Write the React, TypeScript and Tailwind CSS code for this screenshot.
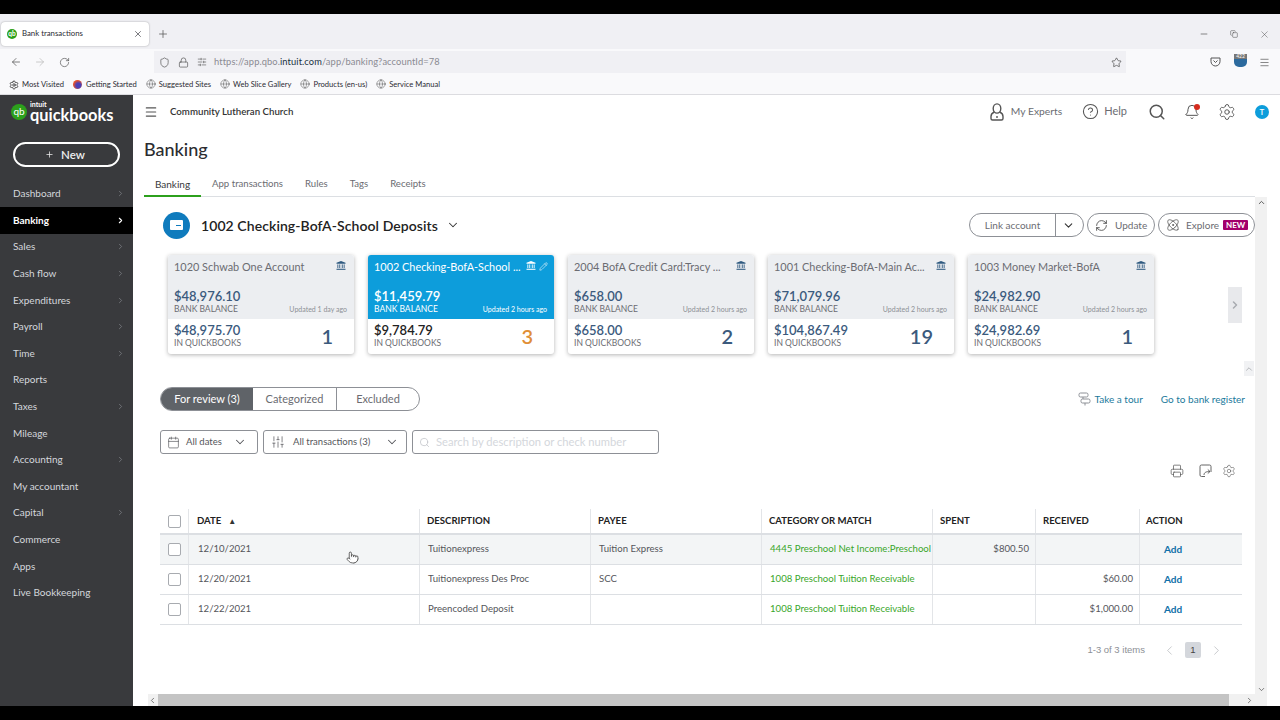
import {
  ArrowLeft, ArrowRight, RotateCw, Shield, Lock, Star, Globe, Settings, Minus, X, Plus, Menu,
  Search, Bell, ChevronRight, ChevronLeft, ChevronDown, ChevronUp, Pencil, RefreshCw, Atom, Calendar,
  SlidersVertical, Printer, Pointer, CircleHelp, Copy,
} from 'lucide-react'

const NAV = [
  { name: 'Dashboard', arrow: true },
  { name: 'Banking', arrow: true, active: true },
  { name: 'Sales', arrow: true },
  { name: 'Cash flow', arrow: true },
  { name: 'Expenditures', arrow: true },
  { name: 'Payroll', arrow: true },
  { name: 'Time', arrow: true },
  { name: 'Reports' },
  { name: 'Taxes', arrow: true },
  { name: 'Mileage' },
  { name: 'Accounting', arrow: true },
  { name: 'My accountant' },
  { name: 'Capital', arrow: true },
  { name: 'Commerce' },
  { name: 'Apps' },
  { name: 'Live Bookkeeping' },
]

const CARDS = [
  { name: '1020 Schwab One Account', bank: '$48,976.10', updated: 'Updated 1 day ago', qb: '$48,975.70', count: '1' },
  { name: '1002 Checking-BofA-School ...', bank: '$11,459.79', updated: 'Updated 2 hours ago', qb: '$9,784.79', count: '3', active: true },
  { name: '2004 BofA Credit Card:Tracy ...', bank: '$658.00', updated: 'Updated 2 hours ago', qb: '$658.00', count: '2' },
  { name: '1001 Checking-BofA-Main Ac...', bank: '$71,079.96', updated: 'Updated 2 hours ago', qb: '$104,867.49', count: '19' },
  { name: '1003 Money Market-BofA', bank: '$24,982.90', updated: 'Updated 2 hours ago', qb: '$24,982.69', count: '1' },
]

const ROWS = [
  { date: '12/10/2021', desc: 'Tuitionexpress', payee: 'Tuition Express', cat: '4445 Preschool Net Income:Preschool', spent: '$800.50', received: '', hover: true },
  { date: '12/20/2021', desc: 'Tuitionexpress Des Proc', payee: 'SCC', cat: '1008 Preschool Tuition Receivable', spent: '', received: '$60.00' },
  { date: '12/22/2021', desc: 'Preencoded Deposit', payee: '', cat: '1008 Preschool Tuition Receivable', spent: '', received: '$1,000.00' },
]

const BOOKMARKS = ['Suggested Sites', 'Web Slice Gallery', 'Products (en-us)', 'Service Manual']

const COLS = 'grid grid-cols-[29px_231px_171px_171px_171px_103px_104px_103px]'

function BankIcon({ className }: { className?: string }) {
  return (
    <svg width="10" height="9" viewBox="0 0 11 10" fill="currentColor" className={className}>
      <path d="M5.5 0 L10.5 2 V3 H0.5 V2 Z" />
      <rect x="1.5" y="3.8" width="1" height="4" />
      <rect x="3.6" y="3.8" width="1" height="4" />
      <rect x="6.4" y="3.8" width="1" height="4" />
      <rect x="8.5" y="3.8" width="1" height="4" />
      <rect x="0.5" y="8.6" width="10" height="1.2" />
    </svg>
  )
}

function BrowserChrome() {
  return (
    <div className="font-['Lato',sans-serif] text-[#2b2b33]">
      <div className="h-[35px] bg-[#f0f0f4] flex items-center pl-[1px] pt-[5px]">
        <div className="w-[148px] h-[24px] bg-white rounded-[4px] shadow-[0_0_2px_rgba(0,0,0,0.35)] flex items-center pl-[6px] pr-[6px] mb-[1px]">
          <div className="w-[10px] h-[10px] rounded-full bg-[#2ca01c] text-white text-[6.5px] font-bold leading-[10px] text-center">qb</div>
          <span className="ml-[5px] text-[7.8px] flex-1">Bank transactions</span>
          <X size={10} strokeWidth={1.5} />
        </div>
        <Plus size={12} strokeWidth={1.5} className="ml-[8px] text-[#555]" />
        <div className="ml-auto flex items-center text-[#444]">
          <Minus size={10} strokeWidth={1.5} className="mr-[21px]" />
          <Copy size={8} strokeWidth={1.5} className="mr-[21px]" />
          <X size={11} strokeWidth={1} className="mr-[10px]" />
        </div>
      </div>
      <div className="h-[26px] bg-[#f9f9fb] flex items-center">
        <ArrowLeft size={12} strokeWidth={1.5} className="ml-[10px] text-[#555]" />
        <ArrowRight size={12} strokeWidth={1.5} className="ml-[12px] text-[#bbb]" />
        <RotateCw size={11} strokeWidth={1.5} className="ml-[13px] text-[#555]" />
        <div className="ml-[84px] w-[972px] h-[22px] bg-[#f0f0f4] flex items-center pl-[5px] pr-[4px]">
          <Shield size={11} strokeWidth={1.5} className="text-[#555]" />
          <Lock size={11} strokeWidth={1.5} className="ml-[8px] text-[#555]" />
          <SlidersVertical size={10} strokeWidth={1.5} className="ml-[8px] rotate-90 text-[#555]" />
          <span className="ml-[7px] text-[9.3px] text-[#8a8a92] tracking-[0.1px]">
            https://app.qbo.<span className="text-[#20303f]">intuit.com</span>/app/banking?accountId=78
          </span>
          <Star size={11} strokeWidth={1.5} className="ml-auto text-[#444]" />
        </div>
        {/* pocket */}
        <svg width="11" height="10" viewBox="0 0 11 10" fill="none" stroke="#555" strokeWidth="1" className="ml-[84px]">
          <path d="M1 1 H10 V4.5 A4.5 4.5 0 0 1 1 4.5 Z" />
          <path d="M3.5 3.5 L5.5 5.5 L7.5 3.5" />
        </svg>
        <div className="ml-[13px] w-[13px] h-[13px] bg-[#2c6a9e] rounded-b-[5px] relative mb-[3px]">
          <span className="absolute top-0 left-0 w-[13px] h-[5px] bg-[#777] text-white text-[5px] leading-[5px] text-center">422</span>
        </div>
        <Menu size={11} strokeWidth={1.5} className="ml-[12px] text-[#555]" />
      </div>
      <div className="h-[20px] bg-[#f9f9fb] flex items-center text-[7.6px] border-b border-[#dcdce0] pl-[9px]">
        <Settings size={10} strokeWidth={2} className="text-[#333]" />
        <span className="ml-[3px]">Most Visited</span>
        <span className="ml-[9px] w-[9px] h-[9px] rounded-full bg-[radial-gradient(circle_at_60%_60%,#4a3fb5_30%,#e8502a_65%)]" />
        <span className="ml-[4px]">Getting Started</span>
        {BOOKMARKS.map(b => (
          <span key={b} className="flex items-center ml-[9px]">
            <Globe size={10} strokeWidth={1} className="text-[#333]" />
            <span className="ml-[3px]">{b}</span>
          </span>
        ))}
      </div>
    </div>
  )
}

function Sidebar() {
  return (
    <div className="w-[133px] shrink-0 bg-[#393a3d] text-white flex flex-col">
      <div className="h-[36px] flex items-center pl-[11px]">
        <div className="w-[16px] h-[16px] rounded-full bg-[#2ca01c] text-white text-[10px] leading-[15px] text-center mb-[2px]">qb</div>
        <div className="ml-[3px] mb-[4px] flex flex-col">
          <span className="text-[7px] leading-[7px] font-bold">intuit</span>
          <span className="text-[16.4px] leading-[13px] font-bold">quickbooks</span>
        </div>
      </div>
      <div className="mt-[11px] mx-[13px] h-[25px] rounded-full border-2 border-white flex items-center justify-center text-[11.5px] font-semibold text-[#eee] pr-[3px]">
        <Plus size={9} strokeWidth={2} className="mr-[7px]" />New
      </div>
      <div className="mt-[13.5px]">
        {NAV.map(n => (
          <div key={n.name} className={`h-[26.6px] flex items-center pl-[13px] pr-[8px] text-[10px] ${n.active ? 'bg-black text-white font-bold' : 'text-[#d4d7dc]'}`}>
            <span className="flex-1">{n.name}</span>
            {n.arrow && <ChevronRight size={9} strokeWidth={n.active ? 3 : 2} className={n.active ? 'text-white' : 'text-[#7d8086]'} />}
          </div>
        ))}
      </div>
    </div>
  )
}

function AccountCard({ card }: { card: typeof CARDS[number] }) {
  const a = card.active
  return (
    <div className="w-[186px] h-[99px] rounded-[3px] overflow-hidden shadow-[0_1px_4px_rgba(0,0,0,0.3)] shrink-0 bg-white">
      <div className={`h-[64px] px-[6px] relative ${a ? 'bg-[#0d9ddb] text-white' : 'bg-[#eceef1] text-[#6b6c72]'}`}>
        <div className="pt-[5px] text-[10.9px] leading-[14px] whitespace-nowrap">{card.name}</div>
        <BankIcon className={`absolute top-[6px] ${a ? 'right-[18px]' : 'right-[8px] text-[#2f5a80]'}`} />
        {a && <Pencil size={9} strokeWidth={1.5} className="absolute top-[7px] right-[6px]" />}
        <div className={`mt-[15px] text-[13px] leading-[15px] font-semibold ${a ? 'text-white' : 'text-[#3b5a7d]'}`}>{card.bank}</div>
        <div className="flex justify-between items-baseline">
          <span className="text-[8.5px] leading-[11px]">BANK BALANCE</span>
          <span className={`text-[7px] pr-[1px] ${a ? 'text-white' : 'text-[#8d9096]'}`}>{card.updated}</span>
        </div>
      </div>
      <div className="h-[35px] px-[6px] flex items-center">
        <div className="flex-1 pb-[2px]">
          <div className={`text-[13px] leading-[15px] font-semibold ${a ? 'text-[#222]' : 'text-[#3b5a7d]'}`}>{card.qb}</div>
          <div className="text-[8.5px] leading-[10px] text-[#6b6c72]">IN QUICKBOOKS</div>
        </div>
        <div className={`mr-[15px] pb-[2px] text-right text-[20px] font-semibold ${a ? 'text-[#e08e36]' : 'text-[#3b5a7d]'}`}>{card.count}</div>
      </div>
    </div>
  )
}

function Checkbox() {
  return <div className="w-[13px] h-[13px] border border-[#a8abb0] rounded-[2px] bg-white" />
}

function TransactionsTable() {
  return (
    <div className="w-[1082px] text-[9.6px]">
      <div className={`${COLS} h-[26px] border-b-2 border-[#dcdfe3] font-bold text-[#222] items-stretch`}>
        <div className="flex items-center justify-center border-r border-[#e3e5e8]"><Checkbox /></div>
        <div className="flex items-center pl-[8px] border-r border-[#e3e5e8]">
          DATE<span className="ml-[7px] text-[8px] text-[#333]">▲</span>
        </div>
        <div className="flex items-center pl-[7px] border-r border-[#e3e5e8]">DESCRIPTION</div>
        <div className="flex items-center pl-[7px] border-r border-[#e3e5e8]">PAYEE</div>
        <div className="flex items-center pl-[7px] border-r border-[#e3e5e8]">CATEGORY OR MATCH</div>
        <div className="flex items-center pl-[7px] border-r border-[#e3e5e8]">SPENT</div>
        <div className="flex items-center pl-[7px] border-r border-[#e3e5e8]">RECEIVED</div>
        <div className="flex items-center pl-[6px]">ACTION</div>
      </div>
      {ROWS.map(r => (
        <div key={r.date} className={`${COLS} h-[30px] border-b border-[#dcdfe3] text-[#55565b] ${r.hover ? 'bg-[#f3f5f6]' : 'bg-white'}`}>
          <div className="flex items-center justify-center border-r border-[#e3e5e8]"><Checkbox /></div>
          <div className="flex items-center pl-[9px] border-r border-[#e3e5e8]">{r.date}</div>
          <div className="flex items-center pl-[8px] border-r border-[#e3e5e8]">{r.desc}</div>
          <div className="flex items-center pl-[8px] border-r border-[#e3e5e8]">{r.payee}</div>
          <div className="flex items-center pl-[8px] border-r border-[#e3e5e8] text-[#3aa62a] whitespace-nowrap overflow-hidden">{r.cat}</div>
          <div className="flex items-center justify-end pr-[6px] border-r border-[#e3e5e8]">{r.spent}</div>
          <div className="flex items-center justify-end pr-[6px] border-r border-[#e3e5e8]">{r.received}</div>
          <div className="flex items-center pl-[24px] pb-[1px] font-bold text-[#0f6fa8] text-[10px]">Add</div>
        </div>
      ))}
    </div>
  )
}

export default function App() {
  return (
    <div className="h-[720px] w-[1280px] bg-black flex flex-col overflow-hidden relative font-['Lato',sans-serif]">
      <div className="h-[14px] shrink-0" />
      <BrowserChrome />
      <div className="h-[611px] flex bg-white">
        <Sidebar />
        <div className="w-[1147px] flex flex-col text-[#393a3d]">
          {/* barra superior */}
          <div className="h-[33px] shrink-0 flex items-center pl-[11px] pr-[11px]">
            <Menu size={14} strokeWidth={2} className="text-[#555]" />
            <span className="ml-[12px] text-[9.7px] font-semibold text-[#333]">Community Lutheran Church</span>
            <div className="ml-auto flex items-center text-[#6b6c72]">
              <svg width="14" height="18" viewBox="0 0 14 18" fill="none" stroke="#555" strokeWidth="1.4">
                <ellipse cx="7" cy="5.5" rx="3.8" ry="4.6" />
                <path d="M4.4 9 C2 10 1 11.5 1 13.5 V15.5 A1.5 1.5 0 0 0 2.5 17 H11.5 A1.5 1.5 0 0 0 13 15.5 V13.5 C13 11.5 12 10 9.6 9" />
                <path d="M7 13 V15" />
              </svg>
              <span className="ml-[7px] text-[10.3px]">My Experts</span>
              <CircleHelp size={17} strokeWidth={1.5} className="ml-[20px] text-[#555]" />
              <span className="ml-[5px] text-[11px]">Help</span>
              <Search size={18} strokeWidth={2} className="ml-[21px] text-[#555]" />
              <span className="ml-[18px] relative">
                <Bell size={16} strokeWidth={1.5} className="text-[#555]" />
                <span className="absolute top-0 right-0 w-[6px] h-[6px] rounded-full bg-[#d52b1e]" />
              </span>
              <Settings size={18} strokeWidth={1.25} className="ml-[18px] text-[#555]" />
              <span className="ml-[19px] w-[14px] h-[14px] rounded-full bg-[#0d9ddb] text-white text-[8px] font-semibold leading-[14px] text-center">T</span>
            </div>
          </div>

          <h1 className="h-[42px] shrink-0 pl-[11px] text-[18px] leading-[42px] font-medium text-[#2b2c30]">Banking</h1>

          <div className="flex-1 flex min-h-0">
            <div className="w-[1122px] shrink-0 flex flex-col">
              <div className="flex-1 min-h-0">
                {/* abas */}
                <div className="ml-[11px] h-[27px] flex border-b border-[#dcdfe3] text-[9.6px] text-[#6b6c72] items-stretch">
                  <div className="w-[57px] flex items-center justify-center pt-[3px] text-[#393a3d] text-[10px] border-b-2 border-[#2ca01c] -mb-[1px]">Banking</div>
                  <div className="ml-[11px] pt-[3px] flex items-center">App transactions</div>
                  <div className="ml-[22px] pt-[3px] flex items-center">Rules</div>
                  <div className="ml-[22px] pt-[3px] flex items-center">Tags</div>
                  <div className="ml-[22px] pt-[3px] flex items-center">Receipts</div>
                </div>

                {/* conta selecionada */}
                <div className="h-[56px] flex items-center pl-[30px]">
                  <div className="w-[27px] h-[27px] rounded-full bg-[#0f7bbd] flex items-center justify-center">
                    <div className="w-[13px] h-[10px] bg-white rounded-[1px] relative">
                      <span className="absolute left-[6px] top-[5px] w-[5px] h-[1px] bg-[#0f7bbd]" />
                    </div>
                  </div>
                  <span className="ml-[11px] text-[14px] font-semibold text-[#222] tracking-[0.08px]">1002 Checking-BofA-School Deposits</span>
                  <ChevronDown size={14} strokeWidth={1.75} className="ml-[8px] text-[#333]" />
                  <div className="ml-auto flex items-center text-[10px] text-[#6b6c72]">
                    <div className="w-[115px] h-[24px] border border-[#8d9096] rounded-full flex items-center">
                      <span className="w-[86px] text-center border-r border-[#8d9096] h-full leading-[22px]">Link account</span>
                      <ChevronDown size={13} strokeWidth={2} className="ml-[6px] text-[#333]" />
                    </div>
                    <div className="ml-[3px] w-[68px] h-[24px] border border-[#8d9096] rounded-full flex items-center pl-[7px]">
                      <RefreshCw size={13} strokeWidth={1.5} className="text-[#444]" />
                      <span className="ml-[7px]">Update</span>
                    </div>
                    <div className="ml-[3px] w-[97px] h-[24px] border border-[#8d9096] rounded-full flex items-center pl-[7px]">
                      <Atom size={14} strokeWidth={1.25} className="text-[#444]" />
                      <span className="ml-[6px]">Explore</span>
                      <span className="ml-[4px] px-[3px] bg-[#a3006b] text-white text-[8px] font-bold leading-[10px] rounded-[1px]">NEW</span>
                    </div>
                  </div>
                </div>

                {/* cards */}
                <div className="mt-[2px] pl-[35px] flex gap-[14px] relative">
                  {CARDS.map(c => <AccountCard key={c.name} card={c} />)}
                  <div className="absolute left-[1095px] top-[32px] w-[14px] h-[36px] bg-[#e8e9ec] flex items-center justify-center">
                    <ChevronRight size={12} strokeWidth={3} className="text-[#a8abb0]" />
                  </div>
                  <div className="absolute left-[1111px] top-[106px] w-[10px] h-[15px] bg-[#f1f2f4] flex items-center justify-center">
                    <ChevronUp size={10} strokeWidth={2} className="text-[#a8abb0]" />
                  </div>
                </div>

                {/* filtros de status */}
                <div className="mt-[33px] pl-[27px] pr-[10px] flex items-center">
                  <div className="h-[24px] w-[260px] flex rounded-full border border-[#8d9096] overflow-hidden text-[11px] text-[#6b6c72]">
                    <div className="w-[92px] bg-[#5f6368] text-white flex items-center justify-center">For review (3)</div>
                    <div className="w-[84px] flex items-center justify-center border-r border-[#8d9096]">Categorized</div>
                    <div className="flex-1 flex items-center justify-center">Excluded</div>
                  </div>
                  <div className="ml-auto flex items-center text-[10px] text-[#1b7a9c]">
                    <svg width="13" height="14" viewBox="0 0 13 14" fill="none" stroke="#8d9096" strokeWidth="1">
                      <rect x="1" y="1" width="9" height="4" rx="1.5" />
                      <rect x="3" y="7" width="9" height="4" rx="1.5" />
                      <path d="M5 5 V7 M7 11 V13.5" />
                    </svg>
                    <span className="ml-[3px]">Take a tour</span>
                    <span className="ml-[18px]">Go to bank register</span>
                  </div>
                </div>

                <div className="mt-[19px] pl-[27px] flex text-[9.5px] text-[#55565b]">
                  <div className="w-[98px] h-[24px] border border-[#8d9096] rounded-[3px] flex items-center pl-[6px]">
                    <Calendar size={13} strokeWidth={1.25} />
                    <span className="ml-[6px]">All dates</span>
                    <ChevronDown size={14} strokeWidth={1.75} className="ml-[11px]" />
                  </div>
                  <div className="ml-[5px] w-[144px] h-[24px] border border-[#8d9096] rounded-[3px] flex items-center pl-[7px]">
                    <SlidersVertical size={14} strokeWidth={1.25} />
                    <span className="ml-[8px]">All transactions (3)</span>
                    <ChevronDown size={14} strokeWidth={1.75} className="ml-[15px]" />
                  </div>
                  <div className="ml-[5px] w-[247px] h-[24px] border border-[#8d9096] rounded-[3px] flex items-center pl-[6px] text-[11.2px] text-[#d4d7dc]">
                    <Search size={11} strokeWidth={1.5} className="text-[#bbbec3]" />
                    <span className="ml-[6px]">Search by description or check number</span>
                  </div>
                </div>

                <div className="mt-[6px] h-[22px] flex items-center justify-end pr-[19px] text-[#555]">
                  <Printer size={14} strokeWidth={1.25} />
                  <svg width="13" height="14" viewBox="0 0 13 14" fill="none" stroke="currentColor" strokeWidth="0.9" className="ml-[15px]">
                    <path d="M6 12.5 H2.5 A1.5 1.5 0 0 1 1 11 V2.5 A1.5 1.5 0 0 1 2.5 1 H10.5 A1.5 1.5 0 0 1 12 2.5 V8" />
                    <path d="M5 11 C5 8.5 7 7.5 11 7.5 M8.8 5.5 L11 7.5 L8.8 9.5" />
                  </svg>
                  <Settings size={14} strokeWidth={1} className="ml-[10px]" />
                </div>

                <div className="mt-[27px] pl-[27px]">
                  <TransactionsTable />
                </div>

                <div className="mt-[16px] pr-[31px] h-[18px] flex items-center justify-end text-[9.5px] text-[#8d9096] font-['Liberation_Sans',sans-serif]">
                  <span>1-3 of 3 items</span>
                  <ChevronLeft size={15} strokeWidth={1} className="ml-[17px] text-[#a8abb0]" />
                  <span className="ml-[8px] w-[16px] h-[16px] bg-[#d4d7dc] rounded-[2px] text-center leading-[16px] text-[#444]">1</span>
                  <ChevronRight size={15} strokeWidth={1} className="ml-[8px] text-[#a8abb0]" />
                </div>
              </div>
              <div className="h-[12px] shrink-0 ml-[15px] bg-[#f1f1f1] flex items-center">
                <ChevronLeft size={9} strokeWidth={2} className="text-[#555] shrink-0" />
                <div className="w-[1071px] h-[12px] bg-[#c4c4c4] ml-[1px]" />
                <ChevronRight size={9} strokeWidth={2} className="text-[#555] ml-[16px] shrink-0" />
              </div>
            </div>
            <div className="w-[12px] shrink-0 mt-[27px] bg-[#f1f1f1] flex flex-col items-center justify-between pt-[1px] pb-[12px]">
              <ChevronUp size={9} strokeWidth={2.5} className="text-[#555]" />
              <ChevronDown size={9} strokeWidth={2} className="text-[#555]" />
            </div>
          </div>
        </div>
      </div>
      <div className="h-[14px] shrink-0" />
      <Pointer size={13} strokeWidth={1.25} className="absolute left-[346px] top-[551px] text-[#222] fill-white" />
    </div>
  )
}
